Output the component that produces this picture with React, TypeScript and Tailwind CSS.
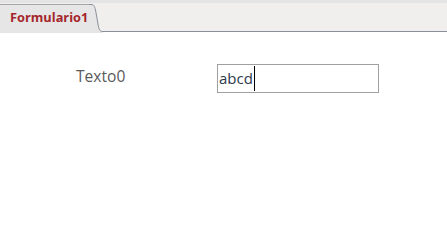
export default function App() {
  return (
    <main className="w-[447px] h-[249px] bg-white overflow-hidden" style={{ fontFamily: '"Open Sans", "Noto Sans", sans-serif' }}>
      {/* tab strip */}
      <div className="h-[32px] bg-[#f0efee] border-t-[3px] border-[#e4e4e4] flex items-end">
        <div className="flex items-stretch h-[29px] -mb-px">
          <div className="h-full bg-[#e6e6e6] border-t border-[#a6a6a6] pl-[10px] pr-[1px] flex items-center">
            <span className="text-[12.8px] font-bold text-[#a4262c] leading-none pb-[3px]">Formulario1</span>
          </div>
          <svg width="14" height="29" viewBox="0 0 14 29" className="block">
            <path d="M0 0.5 L2 0.5 C5 0.5 5.5 2 6.5 6 L9 20 C10 25.5 10.5 27.5 14 27.5 L14 29 L0 29 Z" fill="#e6e6e6" />
            <path d="M0 0.5 L2 0.5 C5 0.5 5.5 2 6.5 6 L9 20 C10 25.5 10.5 27.5 14 27.5" fill="none" stroke="#8a9099" strokeWidth="1" />
          </svg>
        </div>
        <div className="flex-1 border-b border-[#8a9099]" />
      </div>

      {/* form body */}
      <div className="flex items-center pt-[32px]">
        <span className="ml-[76px] w-[141px] text-[15.6px] text-[#5a5a5a] leading-none pb-[4px]">Texto0</span>
        <div className="w-[162px] h-[29px] border border-[#a0a0a0] flex items-center pl-[1px]">
          <span className="text-[15px] text-[#2b3a4a] leading-none pb-[1px]">abcd</span>
          <span className="w-px h-[25px] bg-black ml-px" />
        </div>
      </div>
    </main>
  );
}
